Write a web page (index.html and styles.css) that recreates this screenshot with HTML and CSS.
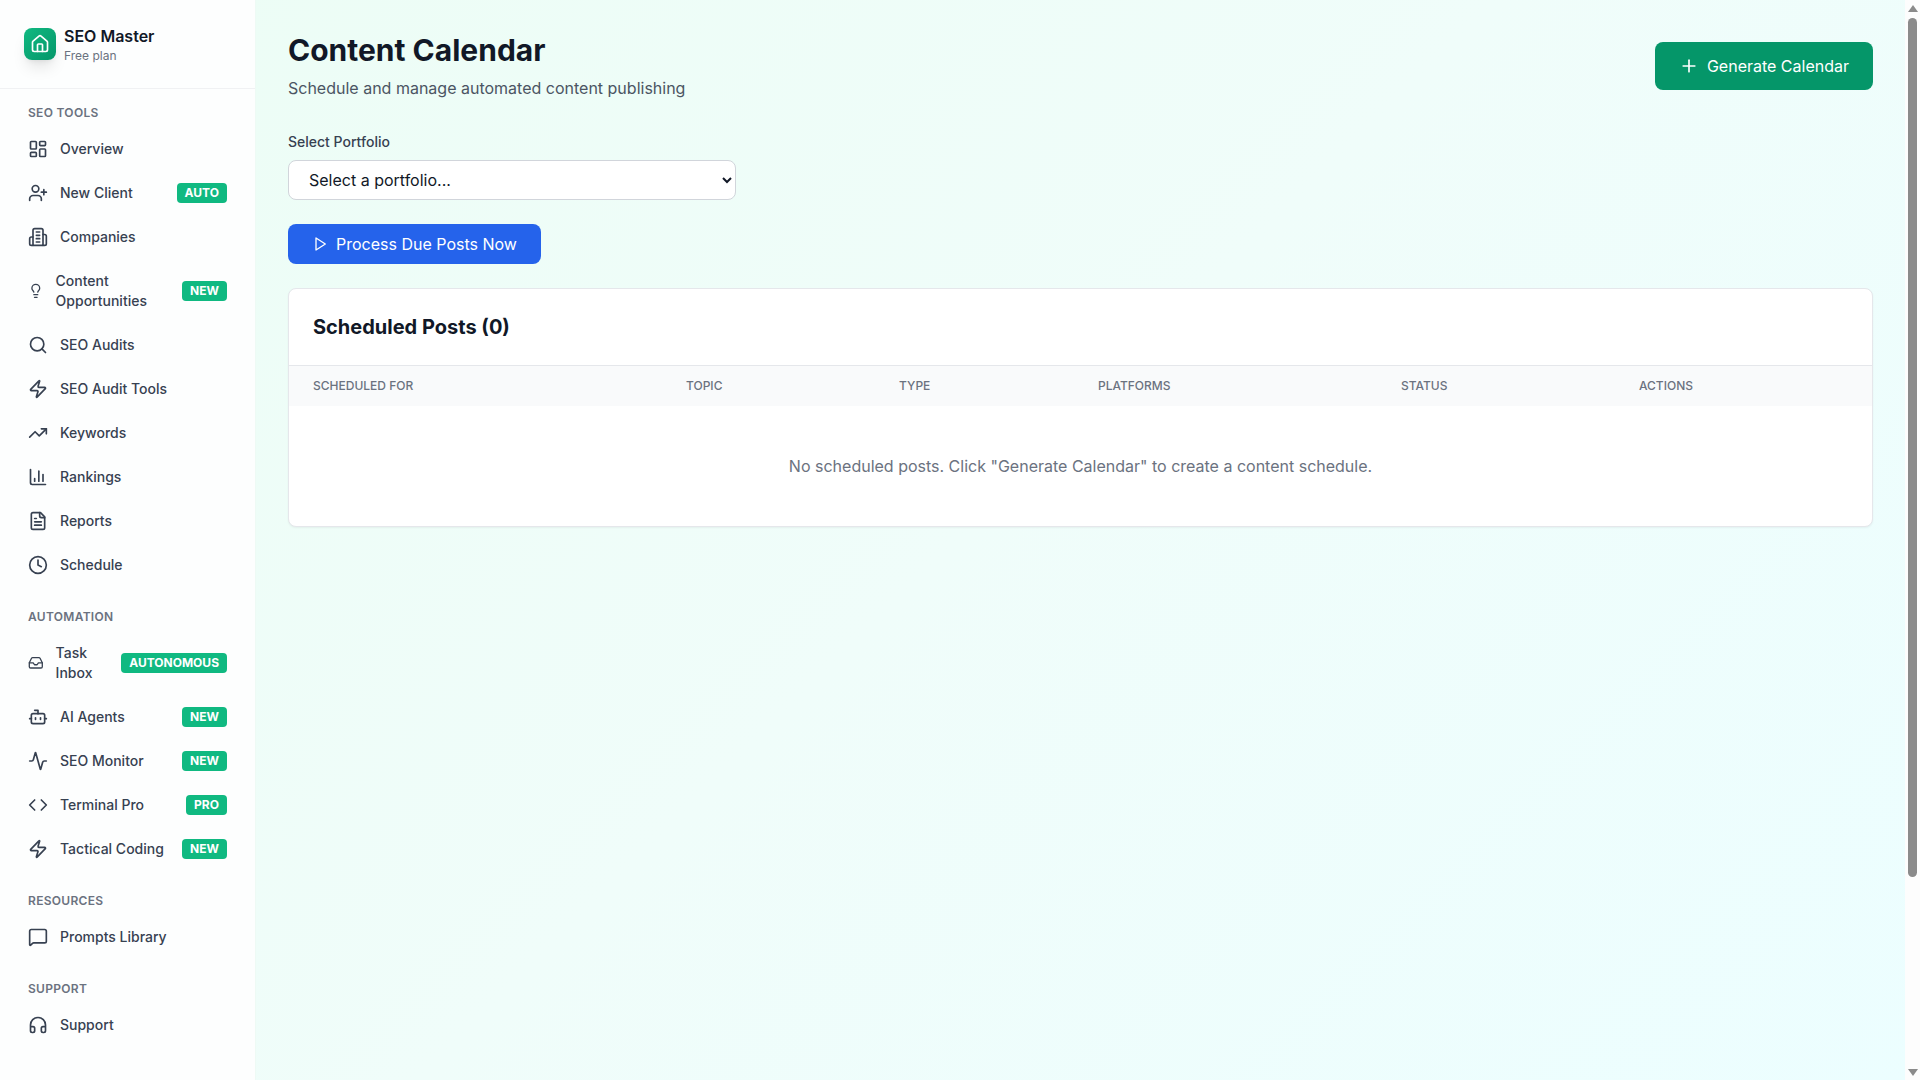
FILE: index.html
```html
<!DOCTYPE html>
<html lang="en">
<head>
	<meta charset="UTF-8">
	<title>Content Calendar</title>
	<link rel="stylesheet" href="styles.css">
</head>
<body>
	<div class="layout">
		<aside class="sidebar">
			<div class="brand">
				<div class="brand-logo">
					<svg viewBox="0 0 24 24"><path d="M15 21v-8a1 1 0 0 0-1-1h-4a1 1 0 0 0-1 1v8"/><path d="M3 10a2 2 0 0 1 .709-1.528l7-5.999a2 2 0 0 1 2.582 0l7 5.999A2 2 0 0 1 21 10v9a2 2 0 0 1-2 2H5a2 2 0 0 1-2-2z"/></svg>
				</div>
				<div class="brand-text">
					<div class="brand-name">SEO Master</div>
					<div class="brand-plan">Free plan</div>
				</div>
			</div>
			<nav class="nav">
				<div class="nav-section">
					<div class="nav-title">SEO TOOLS</div>
					<a class="nav-item">
						<svg class="nav-icon" viewBox="0 0 24 24"><rect x="3" y="3" width="7" height="9" rx="1"/><rect x="14" y="3" width="7" height="5" rx="1"/><rect x="14" y="12" width="7" height="9" rx="1"/><rect x="3" y="16" width="7" height="5" rx="1"/></svg>
						<span>Overview</span>
					</a>
					<a class="nav-item">
						<svg class="nav-icon" viewBox="0 0 24 24"><path d="M16 21v-2a4 4 0 0 0-4-4H6a4 4 0 0 0-4 4v2"/><circle cx="9" cy="7" r="4"/><path d="M19 8v6"/><path d="M22 11h-6"/></svg>
						<span>New Client</span>
						<span class="badge">AUTO</span>
					</a>
					<a class="nav-item">
						<svg class="nav-icon" viewBox="0 0 24 24"><path d="M6 22V4a2 2 0 0 1 2-2h8a2 2 0 0 1 2 2v18Z"/><path d="M6 12H4a2 2 0 0 0-2 2v6a2 2 0 0 0 2 2h2"/><path d="M18 9h2a2 2 0 0 1 2 2v9a2 2 0 0 1-2 2h-2"/><path d="M10 6h4"/><path d="M10 10h4"/><path d="M10 14h4"/><path d="M10 18h4"/></svg>
						<span>Companies</span>
					</a>
					<a class="nav-item">
						<svg class="nav-icon small" viewBox="0 0 24 24"><path d="M15 14c.2-1 .7-1.7 1.5-2.5 1-.9 1.5-2.2 1.5-3.5A6 6 0 0 0 6 8c0 1 .2 2.2 1.5 3.5.7.7 1.3 1.5 1.5 2.5"/><path d="M9 18h6"/><path d="M10 22h4"/></svg>
						<span>Content Opportunities</span>
						<span class="badge">NEW</span>
					</a>
					<a class="nav-item">
						<svg class="nav-icon" viewBox="0 0 24 24"><circle cx="11" cy="11" r="8"/><path d="m21 21-4.3-4.3"/></svg>
						<span>SEO Audits</span>
					</a>
					<a class="nav-item">
						<svg class="nav-icon" viewBox="0 0 24 24"><path d="M4 14a1 1 0 0 1-.78-1.63l9.9-10.2a.5.5 0 0 1 .86.46l-1.92 6.02A1 1 0 0 0 13 10h7a1 1 0 0 1 .78 1.63l-9.9 10.2a.5.5 0 0 1-.86-.46l1.92-6.02A1 1 0 0 0 11 14z"/></svg>
						<span>SEO Audit Tools</span>
					</a>
					<a class="nav-item">
						<svg class="nav-icon" viewBox="0 0 24 24"><path d="M22 7 13.5 15.5 8.5 10.5 2 17"/><path d="M16 7h6v6"/></svg>
						<span>Keywords</span>
					</a>
					<a class="nav-item">
						<svg class="nav-icon" viewBox="0 0 24 24"><path d="M3 3v16a2 2 0 0 0 2 2h16"/><path d="M18 17V9"/><path d="M13 17V5"/><path d="M8 17v-3"/></svg>
						<span>Rankings</span>
					</a>
					<a class="nav-item">
						<svg class="nav-icon" viewBox="0 0 24 24"><path d="M15 2H6a2 2 0 0 0-2 2v16a2 2 0 0 0 2 2h12a2 2 0 0 0 2-2V7Z"/><path d="M14 2v4a2 2 0 0 0 2 2h4"/><path d="M10 9H8"/><path d="M16 13H8"/><path d="M16 17H8"/></svg>
						<span>Reports</span>
					</a>
					<a class="nav-item">
						<svg class="nav-icon" viewBox="0 0 24 24"><circle cx="12" cy="12" r="10"/><path d="M12 6v6l4 2"/></svg>
						<span>Schedule</span>
					</a>
				</div>
				<div class="nav-section">
					<div class="nav-title">AUTOMATION</div>
					<a class="nav-item">
						<svg class="nav-icon small" viewBox="0 0 24 24"><path d="M22 12h-6l-2 3h-4l-2-3H2"/><path d="M5.45 5.11 2 12v6a2 2 0 0 0 2 2h16a2 2 0 0 0 2-2v-6l-3.45-6.89A2 2 0 0 0 16.76 4H7.24a2 2 0 0 0-1.79 1.11z"/></svg>
						<span>Task Inbox</span>
						<span class="badge">AUTONOMOUS</span>
					</a>
					<a class="nav-item">
						<svg class="nav-icon" viewBox="0 0 24 24"><path d="M12 8V4H8"/><rect x="4" y="8" width="16" height="12" rx="2"/><path d="M2 14h2"/><path d="M20 14h2"/><path d="M15 13v2"/><path d="M9 13v2"/></svg>
						<span>AI Agents</span>
						<span class="badge">NEW</span>
					</a>
					<a class="nav-item">
						<svg class="nav-icon" viewBox="0 0 24 24"><path d="M22 12h-2.48a2 2 0 0 0-1.93 1.46l-2.35 8.36a.25.25 0 0 1-.48 0L9.24 2.18a.25.25 0 0 0-.48 0l-2.35 8.36A2 2 0 0 1 4.49 12H2"/></svg>
						<span>SEO Monitor</span>
						<span class="badge">NEW</span>
					</a>
					<a class="nav-item">
						<svg class="nav-icon" viewBox="0 0 24 24"><path d="m16 18 6-6-6-6"/><path d="m8 6-6 6 6 6"/></svg>
						<span>Terminal Pro</span>
						<span class="badge">PRO</span>
					</a>
					<a class="nav-item">
						<svg class="nav-icon" viewBox="0 0 24 24"><path d="M4 14a1 1 0 0 1-.78-1.63l9.9-10.2a.5.5 0 0 1 .86.46l-1.92 6.02A1 1 0 0 0 13 10h7a1 1 0 0 1 .78 1.63l-9.9 10.2a.5.5 0 0 1-.86-.46l1.92-6.02A1 1 0 0 0 11 14z"/></svg>
						<span>Tactical Coding</span>
						<span class="badge">NEW</span>
					</a>
				</div>
				<div class="nav-section">
					<div class="nav-title">RESOURCES</div>
					<a class="nav-item">
						<svg class="nav-icon" viewBox="0 0 24 24"><path d="M22 17a2 2 0 0 1-2 2H6.828a2 2 0 0 0-1.414.586l-2.202 2.202A.71.71 0 0 1 2 21.286V5a2 2 0 0 1 2-2h16a2 2 0 0 1 2 2z"/></svg>
						<span>Prompts Library</span>
					</a>
				</div>
				<div class="nav-section">
					<div class="nav-title">SUPPORT</div>
					<a class="nav-item">
						<svg class="nav-icon" viewBox="0 0 24 24"><path d="M3 14h3a2 2 0 0 1 2 2v3a2 2 0 0 1-2 2H5a2 2 0 0 1-2-2v-7a9 9 0 0 1 18 0v7a2 2 0 0 1-2 2h-1a2 2 0 0 1-2-2v-3a2 2 0 0 1 2-2h3"/></svg>
						<span>Support</span>
					</a>
				</div>
			</nav>
		</aside>

		<main class="main">
			<div class="page-head">
				<div>
					<h1>Content Calendar</h1>
					<p class="subtitle">Schedule and manage automated content publishing</p>
				</div>
				<button class="btn btn-green">
					<svg class="btn-icon-lg" viewBox="0 0 24 24"><path d="M5 12h14"/><path d="M12 5v14"/></svg>
					Generate Calendar
				</button>
			</div>

			<div class="field">
				<label class="field-label" for="portfolio">Select Portfolio</label>
				<select class="field-select" id="portfolio">
					<option>Select a portfolio...</option>
				</select>
			</div>

			<button class="btn btn-blue">
				<svg class="btn-icon" viewBox="0 0 24 24"><path d="M6 3l14 9-14 9z"/></svg>
				Process Due Posts Now
			</button>

			<section class="card">
				<h2 class="card-title">Scheduled Posts (0)</h2>
				<table class="posts">
					<thead>
						<tr>
							<th class="col-date">SCHEDULED FOR</th>
							<th class="col-topic">TOPIC</th>
							<th class="col-type">TYPE</th>
							<th class="col-platforms">PLATFORMS</th>
							<th class="col-status">STATUS</th>
							<th>ACTIONS</th>
						</tr>
					</thead>
					<tbody>
						<tr>
							<td class="empty" colspan="6">No scheduled posts. Click "Generate Calendar" to create a content schedule.</td>
						</tr>
					</tbody>
				</table>
			</section>
		</main>

		<div class="scrollbar">
			<span class="scroll-arrow up"></span>
			<div class="scroll-track"><div class="scroll-thumb"></div></div>
			<span class="scroll-arrow down"></span>
		</div>
	</div>
</body>
</html>
```

FILE: styles.css
```css
* {
	box-sizing: border-box;
}

body {
	margin: 0;
	font-family: Inter, "Noto Sans", sans-serif;
	color: #111827;
}

.layout {
	display: flex;
	height: 100vh;
	overflow: hidden;
	background: linear-gradient(135deg, #ecfdf5 0%, #f0fdfa 50%, #ecfeff 100%);
}

svg {
	fill: none;
	stroke: currentColor;
	stroke-width: 2;
	stroke-linecap: round;
	stroke-linejoin: round;
}

/* sidebar */
.sidebar {
	flex: none;
	width: 256px;
	background: #fdfefe;
	border-right: 1px solid #eefaf5;
}

.brand {
	display: flex;
	align-items: center;
	gap: 8px;
	height: 89px;
	padding: 0 24px;
	border-bottom: 1px solid #f0f1f3;
}
.brand-logo {
	display: flex;
	align-items: center;
	justify-content: center;
	width: 32px;
	height: 32px;
	border-radius: 8px;
	background: linear-gradient(135deg, #10b981, #059669);
	box-shadow: 0 10px 15px -3px rgba(0, 0, 0, 0.1), 0 4px 6px -4px rgba(0, 0, 0, 0.1);
	color: #fff;
}
.brand-logo svg {
	width: 20px;
	height: 20px;
}
.brand-text {
	padding-top: 2px;
}
.brand-name {
	font-size: 16px;
	line-height: 20px;
	font-weight: 600;
}
.brand-plan {
	margin-top: 2px;
	font-size: 12px;
	line-height: 16px;
	color: #6b7280;
}

.nav {
	padding: 16px 16px 0;
}
.nav-section {
	margin-bottom: 22px;
}
.nav-title {
	padding: 0 12px;
	margin-bottom: 6px;
	font-size: 12px;
	line-height: 16px;
	font-weight: 600;
	letter-spacing: 0.3px;
	color: #6b7280;
}
.nav-item {
	display: flex;
	align-items: center;
	gap: 12px;
	padding: 12px;
	font-size: 14px;
	line-height: 20px;
	font-weight: 500;
	color: #374151;
}
.nav-icon {
	flex: none;
	width: 20px;
	height: 20px;
}
.nav-icon.small {
	width: 15.6px;
	height: 15.6px;
}
.badge {
	flex: none;
	margin-left: auto;
	padding: 0 8px;
	border-radius: 4px;
	background: #10b981;
	color: #fff;
	font-size: 12px;
	line-height: 20px;
	font-weight: 700;
}

/* main */
.main {
	flex: 1;
	min-width: 0;
	padding: 32px;
}
.page-head {
	display: flex;
	align-items: center;
	justify-content: space-between;
	margin-bottom: 32px;
}
h1 {
	margin: 0 0 8px;
	font-size: 30px;
	line-height: 36px;
	font-weight: 700;
}
.subtitle {
	margin: 0;
	font-size: 16px;
	line-height: 24px;
	color: #4b5563;
}

.btn {
	display: flex;
	align-items: center;
	gap: 8px;
	padding: 0 24px;
	border: none;
	border-radius: 8px;
	color: #fff;
	font-family: inherit;
	font-size: 16px;
	font-weight: 400;
}
.btn-green {
	height: 48px;
	background: #059669;
}
.btn-blue {
	height: 40px;
	background: #2563eb;
}
.btn-icon {
	width: 16px;
	height: 16px;
}
.btn-icon-lg {
	width: 20px;
	height: 20px;
}

.field {
	margin-bottom: 24px;
}
.field-label {
	display: block;
	margin-bottom: 8px;
	font-size: 14px;
	line-height: 20px;
	font-weight: 500;
	color: #374151;
}
.field-select {
	display: block;
	width: 448px;
	height: 40px;
	padding: 0 16px;
	border: 1px solid #d1d5db;
	border-radius: 8px;
	background: #fff;
	color: #111827;
	font-family: inherit;
	font-size: 16px;
}

.card {
	margin-top: 24px;
	background: #fff;
	border: 1px solid #e5e7eb;
	border-radius: 8px;
	box-shadow: 0 1px 2px rgba(0, 0, 0, 0.05);
	overflow: hidden;
}
.card-title {
	margin: 0;
	padding: 24px;
	font-size: 20px;
	line-height: 28px;
	font-weight: 700;
	border-bottom: 1px solid #e5e7eb;
}
.posts {
	width: 100%;
	border-collapse: collapse;
	table-layout: fixed;
}
.posts th {
	height: 40px;
	padding: 0 24px;
	background: #f9fafb;
	text-align: left;
	font-size: 12px;
	line-height: 16px;
	font-weight: 500;
	color: #6b7280;
}
.col-date { width: 373px; }
.col-topic { width: 213px; }
.col-type { width: 199px; }
.col-platforms { width: 303px; }
.col-status { width: 238px; }

.empty {
	padding: 48px 24px;
	text-align: center;
	font-size: 16px;
	line-height: 24px;
	color: #6b7280;
}

/* the window scrollbar, drawn because the page itself does not scroll here */
.scrollbar {
	flex: none;
	display: flex;
	flex-direction: column;
	align-items: center;
	width: 15px;
	background: #fdfdfd;
}
.scroll-arrow {
	flex: none;
	width: 0;
	height: 0;
	border-left: 5px solid transparent;
	border-right: 5px solid transparent;
}
.scroll-arrow.up {
	margin: 5px 0 6px;
	border-bottom: 7px solid #8b8b8b;
}
.scroll-arrow.down {
	margin: 6px 0 4px;
	border-top: 7px solid #8b8b8b;
}
.scroll-track {
	flex: 1;
	width: 100%;
}
.scroll-thumb {
	width: 9px;
	height: 859px;
	margin: 0 auto;
	border-radius: 5px;
	background: #8b8b8b;
}
```
